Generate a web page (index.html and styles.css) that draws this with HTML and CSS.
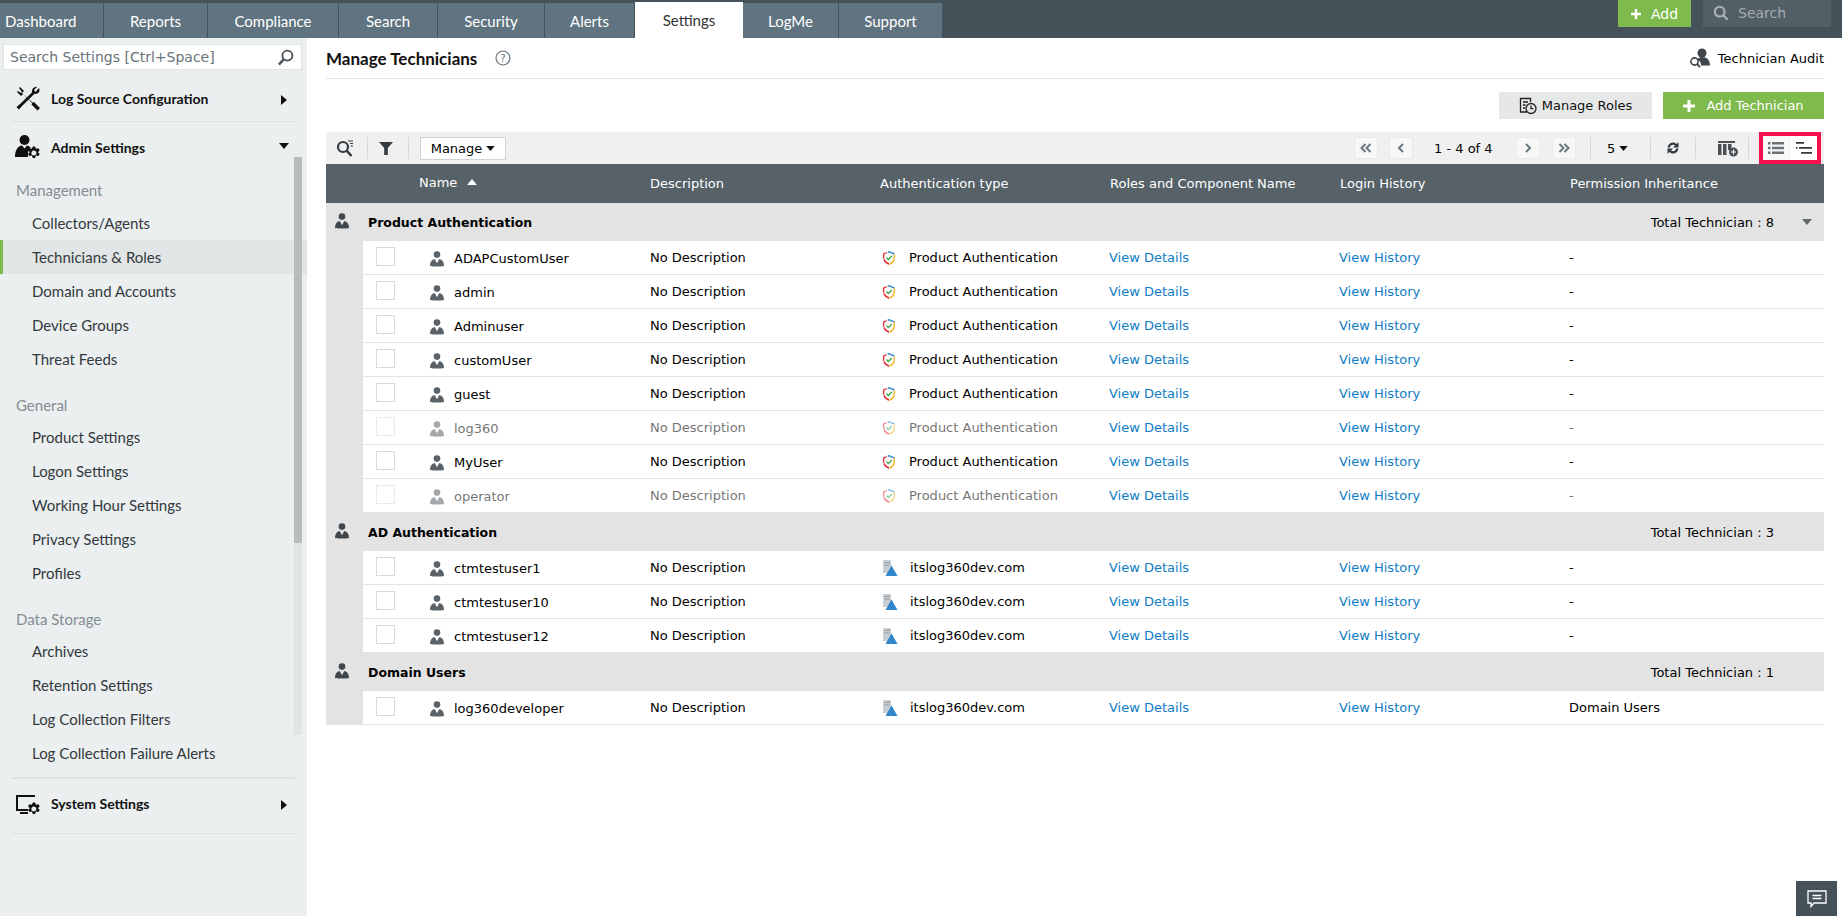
FILE: index.html
```html
<!DOCTYPE html>
<html lang="en">
<head>
<meta charset="utf-8">
<title>Manage Technicians</title>
<link rel="stylesheet" href="styles.css">
</head>
<body>
<svg class="defs" width="0" height="0" aria-hidden="true">
  <symbol id="person" viewBox="0 0 16 16"><circle cx="8" cy="3.6" r="3.3"/><path d="M1 15c0-4 1.600-6.500 4.700-7l2.300 4.200L10.300 8c3.100.5 4.700 3 4.700 7 0 .6-14 .6-14 0z"/></symbol>
  <symbol id="shield" viewBox="0 0 16 16"><path d="M2 3.500 6 2 5.500 3.600 3.300 4.400v3.800L2.200 9.500C1.700 8 2 5 2 3.500z" fill="#e8343c"/><path d="M2.500 10.200 3.700 8.700c.5 1.800 2 3.300 4.300 4.200v2C5 13.800 3.400 12.200 2.500 10.200z" fill="#e8343c"/><path d="M6.500 1.500 8 1l6 2.400-1.300 1.100L8 2.600 7 3z" fill="#2f86cc"/><path d="M14 4v4c0 3.200-2.300 5.700-5.400 7V13c2.400-1 4-2.800 4-5V5z" fill="#f3b52c"/><path d="m5 8 .9-1 1.500 1.500 3-3 .9 1-3.900 3.900z" fill="#3aa64a"/></symbol>
  <symbol id="domain" viewBox="0 0 16 18"><path d="M1 1h8v13H1z" fill="#c9ced2"/><path d="M2.500 3h5v1h-5zM2.500 5.500h5v1h-5z" fill="#8e979d"/><path d="M9.500 6.500 15.500 17h-12z" fill="#2f86cc"/></symbol>
  <symbol id="caret-right" viewBox="0 0 6 10"><path d="M0 0l6 5-6 5z"/></symbol>
  <symbol id="caret-down" viewBox="0 0 10 6"><path d="M0 0h10L5 6z"/></symbol>
</svg>

<header class="topbar">
  <nav class="tabs">
    <a class="tab tab-first">Dashboard</a>
    <a class="tab tab-reports">Reports</a>
    <a class="tab tab-compliance">Compliance</a>
    <a class="tab tab-search">Search</a>
    <a class="tab tab-security">Security</a>
    <a class="tab tab-alerts">Alerts</a>
    <a class="tab tab-settings active">Settings</a>
    <a class="tab tab-logme">LogMe</a>
    <a class="tab tab-support">Support</a>
  </nav>
  <div class="top-actions">
    <a class="top-add"><svg class="ic-plus-sm" viewBox="0 0 12 12"><path d="M4.500 0h3v4.500H12v3H7.500V12h-3V7.500H0v-3h4.500z" fill="#fff"/></svg>Add</a>
    <div class="top-search"><svg class="ic-top-search" viewBox="0 0 18 18" fill="none" stroke="#aab2b7" stroke-width="2.400"><circle cx="7.500" cy="7.500" r="5.500"/><path d="m11.500 11.500 5 5"/></svg>Search</div>
  </div>
</header>

<div class="layout">
  <aside class="sidebar">
    <div class="side-search"><span>Search Settings [Ctrl+Space]</span><svg class="ic-side-search" viewBox="0 0 18 18" fill="none" stroke="#4b555b" stroke-width="2"><circle cx="11" cy="7" r="5.300"/><path d="M7 11 2 16.500" stroke-width="2.600"/></svg></div>

    <div class="side-head side-head-first">
      <svg class="side-ic" viewBox="0 0 26 26"><path d="M5 2 9 6 7 8 17 18l2-1 6 6-2.500 2.500-6-6 1-2L8 9l-2 2-4-4 1-1 3 2 1-1-3-4z"/><path d="M24 3c1 2 .5 4.500-1.500 5.500-1 .5-2 .5-3 .3L7 21l-3 3.500L1.500 22 5 19 17 7.500c-.3-1 -.2-2 .3-3C18.300 2.500 20.500 1.500 22 2l-3 3 1.500 2z"/></svg>
      <span class="side-title">Log Source Configuration</span>
      <svg class="side-caret-r"><use href="#caret-right"/></svg>
    </div>
    <div class="side-rule"></div>
    <div class="side-head side-head-admin">
      <svg class="side-ic" viewBox="0 0 26 26"><circle cx="9.500" cy="6" r="5"/><path d="M0 23c0-7 3-11 7-11.500l2.500 3 2.500-3c1.500.2 2.800 1 3.700 2.200-2 1.600-3 4-2.700 9.300z"/><path d="M20 12.500l1 2.300 2.500-.5 1.200 2-1.700 1.900 1.700 1.900-1.200 2-2.500-.5-1 2.300h-2.200l-1-2.300-2.500.5-1.200-2 1.700-1.900-1.700-1.900 1.200-2 2.500.5 1-2.300zm-1.100 4a2.500 2.500 0 1 0 0 5 2.500 2.500 0 0 0 0-5z" fill-rule="evenodd"/></svg>
      <span class="side-title">Admin Settings</span>
      <svg class="side-caret-d"><use href="#caret-down"/></svg>
    </div>

    <div class="side-scroll">
      <div class="side-group side-group-first">Management</div>
      <a class="side-item">Collectors/Agents</a>
      <a class="side-item selected">Technicians &amp; Roles</a>
      <a class="side-item">Domain and Accounts</a>
      <a class="side-item">Device Groups</a>
      <a class="side-item">Threat Feeds</a>
      <div class="side-group">General</div>
      <a class="side-item">Product Settings</a>
      <a class="side-item">Logon Settings</a>
      <a class="side-item">Working Hour Settings</a>
      <a class="side-item">Privacy Settings</a>
      <a class="side-item">Profiles</a>
      <div class="side-group">Data Storage</div>
      <a class="side-item">Archives</a>
      <a class="side-item">Retention Settings</a>
      <a class="side-item">Log Collection Filters</a>
      <a class="side-item">Log Collection Failure Alerts</a>
      <div class="scroll-track"><div class="scroll-thumb"></div></div>
    </div>

    <div class="side-rule side-rule-sys"></div>
    <div class="side-head side-head-sys">
      <svg class="side-ic" viewBox="0 0 26 26"><path d="M1 4h19v2H3v12h10v2H1z"/><path d="M5 21h8v2H5z"/><path d="M20 11.500l1 2.300 2.500-.5 1.200 2-1.700 1.900 1.700 1.900-1.200 2-2.500-.5-1 2.300h-2.200l-1-2.300-2.500.5-1.200-2 1.700-1.900-1.700-1.900 1.200-2 2.500.5 1-2.300zm-1.100 4a2.500 2.500 0 1 0 0 5 2.500 2.500 0 0 0 0-5z" fill-rule="evenodd"/></svg>
      <span class="side-title">System Settings</span>
      <svg class="side-caret-r"><use href="#caret-right"/></svg>
    </div>
    <div class="side-rule"></div>
  </aside>

  <main class="content">
    <div class="title-row">
      <h1>Manage Technicians</h1>
      <svg class="ic-help" viewBox="0 0 16 16"><circle cx="8" cy="8" r="7" fill="none" stroke="#6a7277" stroke-width="1.200"/><text x="8" y="11.700" text-anchor="middle" class="help-q">?</text></svg>
      <div class="audit">
        <svg class="ic-audit" viewBox="0 0 22 20"><circle cx="13" cy="5" r="4.500" fill="#3f474c"/><path d="M8 11.500c1-1.500 3-2.500 5-2.500 5 0 8 3 8 8.500h-9c.5-2.500-1-5-4-6z" fill="#3f474c"/><circle cx="5.500" cy="13.500" r="3.600" fill="none" stroke="#3f474c" stroke-width="1.600"/><path d="m8 16 3 3" stroke="#3f474c" stroke-width="1.800"/></svg>
        <span>Technician Audit</span>
      </div>
    </div>

    <div class="action-row">
      <a class="btn btn-grey"><svg class="ic-roles" viewBox="0 0 18 18" fill="none" stroke="#222" stroke-width="1.300"><path d="M8 15H1.500V1.500h10V5"/><path d="M4 5h5M4 8h2.500M4 11h2"/><circle cx="12" cy="11.500" r="5"/><path d="M12 8.500v3.200h2.500"/></svg>Manage Roles</a>
      <a class="btn btn-green"><svg class="ic-plus" viewBox="0 0 12 12"><path d="M4.500 0h3v4.500H12v3H7.500V12h-3V7.500H0v-3h4.500z" fill="#fff"/></svg>Add Technician</a>
    </div>

    <div class="toolbar">
      <div class="tool-left">
        <svg class="ic-tsearch" viewBox="0 0 18 18" fill="none" stroke="#333b40" stroke-width="2.200"><circle cx="7" cy="8" r="5"/><path d="m10.500 11.500 5 5.500" stroke-width="2.600"/><path d="M12 2h5M14 4.500h3M14.500 7H17" stroke-width="1.100"/></svg>
        <i class="tsep"></i>
        <svg class="ic-filter" viewBox="0 0 14 14"><path d="M0 1h14L8.800 7v7H5.200V7z" fill="#333b40"/></svg>
        <i class="tsep"></i>
        <a class="manage-btn">Manage<svg class="mini-caret"><use href="#caret-down"/></svg></a>
      </div>
      <div class="tool-right">
        <a class="pg"><svg viewBox="0 0 12 10" fill="none" stroke="#6c7880" stroke-width="2"><path d="M5.500 1 1.500 5l4 4M10.500 1l-4 4 4 4"/></svg></a>
        <a class="pg pg-prev"><svg viewBox="0 0 12 10" fill="none" stroke="#6c7880" stroke-width="2"><path d="M8 1 4 5l4 4"/></svg></a>
        <span class="pg-text">1 - 4 of 4</span>
        <a class="pg pg-next"><svg viewBox="0 0 12 10" fill="none" stroke="#6c7880" stroke-width="2"><path d="m4 1 4 4-4 4"/></svg></a>
        <a class="pg"><svg viewBox="0 0 12 10" fill="none" stroke="#6c7880" stroke-width="2"><path d="m1.500 1 4 4-4 4M6.500 1l4 4-4 4"/></svg></a>
        <i class="tsep tsep-a"></i>
        <span class="per-page">5<svg class="mini-caret"><use href="#caret-down"/></svg></span>
        <i class="tsep tsep-b"></i>
        <svg class="ic-refresh" viewBox="0 0 16 16"><path d="M2.500 7.500C3 4.500 5.300 2.500 8 2.500c1.500 0 2.800.6 3.700 1.500L13.500 2v5.500H8l2-2c-.5-.5-1.200-.8-2-.8-1.500 0-2.800 1-3.100 2.800z" fill="#333b40"/><path d="M13.500 8.500C13 11.500 10.700 13.500 8 13.500c-1.500 0-2.800-.6-3.700-1.500L2.500 14V8.500H8l-2 2c.5.5 1.200.8 2 .8 1.500 0 2.800-1 3.100-2.800z" fill="#333b40"/></svg>
        <i class="tsep tsep-c"></i>
        <svg class="ic-cols" viewBox="0 0 22 18"><path d="M1 2h17v2H1zM1 5h3.500v11H1zM6 5h3.500v11H6zM11 5h3.500v6H11z" fill="#4a5257"/><circle cx="16.500" cy="13" r="4.500" fill="#4a5257"/><path d="M16 10.500h1v2h2v1h-2v2h-1v-2h-2v-1h2z" fill="#fff"/></svg>
        <i class="tsep tsep-d"></i>
        <div class="view-switch">
          <a class="view-btn"><svg viewBox="0 0 16 12" fill="#6a7277"><path d="M0 0h2.500v2.500H0zM4 0h12v2.500H4zM0 4.700h2.500v2.500H0zM4 4.700h12v2.500H4zM0 9.400h2.500v2.500H0zM4 9.400h12v2.500H4z"/></svg></a>
          <a class="view-btn"><svg viewBox="0 0 16 12" fill="#333b40"><path d="M0 0h8v1.800H0zM3 5h13v1.800H3zM5 10h11v1.800H5zM0 5h1.500v1.800H0z"/></svg></a>
        </div>
      </div>
    </div>

    <div class="thead">
      <span class="th th-name">Name<svg class="sort-up" viewBox="0 0 10 6"><path d="M0 6h10L5 0z" fill="#fff"/></svg></span>
      <span class="th">Description</span>
      <span class="th">Authentication type</span>
      <span class="th">Roles and Component Name</span>
      <span class="th">Login History</span>
      <span class="th">Permission Inheritance</span>
    </div>

    <div class="group">
      <svg class="person gicon"><use href="#person"/></svg>
      <b>Product Authentication</b>
      <span class="total">Total Technician : 8</span>
      <svg class="group-caret"><use href="#caret-down"/></svg>
    </div>
    <div class="rows">
      <div class="row"><i class="cb"></i><svg class="person"><use href="#person"/></svg><span class="uname">ADAPCustomUser</span><span>No Description</span><span class="auth"><svg class="ic-shield"><use href="#shield"/></svg>Product Authentication</span><a class="lnk">View Details</a><a class="lnk">View History</a><span>-</span></div>
      <div class="row"><i class="cb"></i><svg class="person"><use href="#person"/></svg><span class="uname">admin</span><span>No Description</span><span class="auth"><svg class="ic-shield"><use href="#shield"/></svg>Product Authentication</span><a class="lnk">View Details</a><a class="lnk">View History</a><span>-</span></div>
      <div class="row"><i class="cb"></i><svg class="person"><use href="#person"/></svg><span class="uname">Adminuser</span><span>No Description</span><span class="auth"><svg class="ic-shield"><use href="#shield"/></svg>Product Authentication</span><a class="lnk">View Details</a><a class="lnk">View History</a><span>-</span></div>
      <div class="row"><i class="cb"></i><svg class="person"><use href="#person"/></svg><span class="uname">customUser</span><span>No Description</span><span class="auth"><svg class="ic-shield"><use href="#shield"/></svg>Product Authentication</span><a class="lnk">View Details</a><a class="lnk">View History</a><span>-</span></div>
      <div class="row"><i class="cb"></i><svg class="person"><use href="#person"/></svg><span class="uname">guest</span><span>No Description</span><span class="auth"><svg class="ic-shield"><use href="#shield"/></svg>Product Authentication</span><a class="lnk">View Details</a><a class="lnk">View History</a><span>-</span></div>
      <div class="row dim"><i class="cb"></i><svg class="person"><use href="#person"/></svg><span class="uname">log360</span><span>No Description</span><span class="auth"><svg class="ic-shield"><use href="#shield"/></svg>Product Authentication</span><a class="lnk">View Details</a><a class="lnk">View History</a><span>-</span></div>
      <div class="row"><i class="cb"></i><svg class="person"><use href="#person"/></svg><span class="uname">MyUser</span><span>No Description</span><span class="auth"><svg class="ic-shield"><use href="#shield"/></svg>Product Authentication</span><a class="lnk">View Details</a><a class="lnk">View History</a><span>-</span></div>
      <div class="row dim"><i class="cb"></i><svg class="person"><use href="#person"/></svg><span class="uname">operator</span><span>No Description</span><span class="auth"><svg class="ic-shield"><use href="#shield"/></svg>Product Authentication</span><a class="lnk">View Details</a><a class="lnk">View History</a><span>-</span></div>
    </div>

    <div class="group">
      <svg class="person gicon"><use href="#person"/></svg>
      <b>AD Authentication</b>
      <span class="total">Total Technician : 3</span>
    </div>
    <div class="rows">
      <div class="row"><i class="cb"></i><svg class="person"><use href="#person"/></svg><span class="uname">ctmtestuser1</span><span>No Description</span><span class="auth"><svg class="ic-domain"><use href="#domain"/></svg>itslog360dev.com</span><a class="lnk">View Details</a><a class="lnk">View History</a><span>-</span></div>
      <div class="row"><i class="cb"></i><svg class="person"><use href="#person"/></svg><span class="uname">ctmtestuser10</span><span>No Description</span><span class="auth"><svg class="ic-domain"><use href="#domain"/></svg>itslog360dev.com</span><a class="lnk">View Details</a><a class="lnk">View History</a><span>-</span></div>
      <div class="row"><i class="cb"></i><svg class="person"><use href="#person"/></svg><span class="uname">ctmtestuser12</span><span>No Description</span><span class="auth"><svg class="ic-domain"><use href="#domain"/></svg>itslog360dev.com</span><a class="lnk">View Details</a><a class="lnk">View History</a><span>-</span></div>
    </div>

    <div class="group">
      <svg class="person gicon"><use href="#person"/></svg>
      <b>Domain Users</b>
      <span class="total">Total Technician : 1</span>
    </div>
    <div class="rows">
      <div class="row"><i class="cb"></i><svg class="person"><use href="#person"/></svg><span class="uname">log360developer</span><span>No Description</span><span class="auth"><svg class="ic-domain"><use href="#domain"/></svg>itslog360dev.com</span><a class="lnk">View Details</a><a class="lnk">View History</a><span>Domain Users</span></div>
    </div>
  </main>
</div>

<a class="chat"><svg viewBox="0 0 20 18" fill="none" stroke="#fff" stroke-width="1.300"><path d="M1 1h18v12H7l-3 3.500V13H1z"/><path d="M5.500 5.500h9M5.500 8.500h9"/></svg></a>
</body>
</html>
```

FILE: styles.css
```css
* { box-sizing: border-box; }
html, body { margin: 0; padding: 0; height: 100%; }
body {
  width: 1842px;
  height: 916px;
  overflow: hidden;
  position: relative;
  background: #fff;
  color: #000;
  font-family: "DejaVu Sans", sans-serif;
  font-size: 13px;
  display: flex;
  flex-direction: column;
}
a { color: inherit; text-decoration: none; }
.defs { position: absolute; }

/* top bar */
.topbar {
  height: 38px;
  flex: none;
  background: #45525a;
  display: flex;
  justify-content: space-between;
  padding-top: 3px;
}
.tabs { display: flex; height: 35px; }
.tab {
  background: #5f7480;
  color: #fff;
  font-family: Lato, sans-serif;
  font-size: 15px;
  display: flex;
  align-items: center;
  justify-content: center;
  border-right: 1px solid #45525a;
}
.tab-first { width: 104px; justify-content: flex-start; padding-left: 5px; }
.tab-reports { width: 104px; }
.tab-compliance { width: 131px; }
.tab-search { width: 99px; }
.tab-security { width: 107px; }
.tab-alerts { width: 90px; }
.tab-settings { width: 108px; }
.tab-logme { width: 96px; }
.tab-support { width: 104px; }
.tab.active { background: #fff; color: #333; border-right: 0; margin-top: -1px; height: 36px; }
.top-actions { display: flex; align-items: flex-start; margin-top: -3px; padding-right: 11px; }
.top-add {
  width: 73px;
  height: 27px;
  background: #7fba4c;
  color: #fff;
  display: flex;
  align-items: center;
  justify-content: center;
  font-size: 14px;
  margin-right: 12px;
}
.ic-plus-sm { width: 10px; height: 10px; margin-right: 10px; }
.top-search {
  width: 128px;
  height: 27px;
  background: #535f67;
  color: #a4acb1;
  display: flex;
  align-items: center;
  font-size: 14px;
  padding: 0 0 2px 10px;
}
.ic-top-search { width: 16px; height: 16px; margin-right: 9px; }

.layout { flex: 1; display: flex; min-height: 0; }

/* sidebar */
.sidebar {
  width: 307px;
  flex: none;
  background: #ebeff0;
  padding-top: 6px;
}
.side-search {
  margin-left: 3px;
  width: 299px;
  height: 26px;
  background: #fff;
  border: 1px solid #e1e4e5;
  color: #69747a;
  font-size: 14px;
  display: flex;
  align-items: center;
  justify-content: space-between;
  padding: 0 7px 0 6px;
}
.ic-side-search { width: 17px; height: 17px; }
.side-head {
  display: flex;
  align-items: center;
  padding-left: 15px;
  font-family: Lato, sans-serif;
  font-weight: 700;
  font-size: 14px;
  color: #111;
}
.side-head-first { height: 36px; margin-top: 10px; }
.side-head-admin { height: 34px; margin-top: 8px; }
.side-head-sys { height: 49px; }
.side-ic { width: 26px; height: 26px; fill: #111; flex: none; }
.side-title { margin-left: 10px; flex: 1; }
.side-caret-r { width: 6px; height: 10px; fill: #111; margin-right: 20px; margin-top: 3px; }
.side-caret-d { width: 10px; height: 6px; fill: #111; margin-right: 18px; margin-top: -2px; }
.side-rule { height: 1px; background: #dde1e2; margin: 5px 12px 0; }
.side-rule-sys { margin-top: 7px; height: 2px; }
.side-scroll { position: relative; }
.side-group {
  height: 30px;
  margin-top: 14px;
  padding-left: 16px;
  display: flex;
  align-items: center;
  color: #838d92;
  font-family: Lato, sans-serif;
  font-size: 15px;
}
.side-group-first { margin-top: 10px; height: 32px; }
.side-item {
  display: flex;
  align-items: center;
  height: 34px;
  padding-left: 32px;
  font-family: Lato, sans-serif;
  font-size: 15px;
  color: #33393d;
}
.side-item.selected { background: #e1e5e5; border-left: 3px solid #7fba4c; padding-left: 29px; }
.scroll-track {
  position: absolute;
  left: 294px;
  top: -17px;
  width: 8px;
  height: 578px;
  background: #e2e5e5;
}
.scroll-thumb { height: 386px; background: #b5bdbd; }

/* main */
.content { width: 1498px; margin-left: 19px; }
.title-row {
  height: 41px;
  display: flex;
  align-items: center;
  border-bottom: 1px solid #e1e3e4;
}
h1 {
  margin: 0;
  font-family: Lato, sans-serif;
  font-size: 17px;
  font-weight: 700;
  color: #111;
}
.ic-help { width: 16px; height: 16px; margin-left: 18px; }
.help-q { font-family: "DejaVu Sans", sans-serif; font-size: 10px; fill: #6a7277; }
.audit { margin-left: auto; display: flex; align-items: center; }
.ic-audit { width: 22px; height: 20px; margin-right: 7px; }
.action-row { display: flex; justify-content: flex-end; gap: 11px; margin-top: 13px; }
.btn {
  height: 27px;
  display: flex;
  align-items: center;
  justify-content: center;
  font-size: 13px;
}
.btn-grey { width: 153px; background: #e6e8e8; color: #111; }
.btn-green { width: 161px; background: #7fba4c; color: #fff; }
.ic-roles { width: 18px; height: 18px; margin-right: 5px; }
.ic-plus { width: 12px; height: 12px; margin-right: 11px; }

.toolbar {
  margin-top: 13px;
  height: 32px;
  background: #f0f0f0;
  display: flex;
  justify-content: space-between;
  align-items: center;
  padding-right: 7px;
}
.tool-left, .tool-right { display: flex; align-items: center; }
.ic-tsearch { width: 18px; height: 18px; margin-left: 10px; }
.tsep { width: 1px; height: 22px; background: #d4d6d7; display: block; margin: 0 12px 0 13px; }
.ic-filter { width: 14px; height: 14px; margin: 0 1px 0 -1px; }
.tool-left .tsep + .ic-filter + .tsep { margin: 0 11px 0 14px; }
.manage-btn {
  width: 86px;
  height: 23px;
  background: #fff;
  border: 1px solid #d1d4d5;
  display: flex;
  align-items: center;
  justify-content: center;
  font-size: 13px;
}
.mini-caret { width: 9px; height: 5px; margin-left: 4px; fill: #111; }
.pg {
  width: 24px;
  height: 22px;
  background: #f7f7f7;
  border: 1px solid #eaeaea;
  display: flex;
  align-items: center;
  justify-content: center;
}
.pg svg { width: 12px; height: 10px; }
.pg-prev { margin-left: 11px; }
.pg-next { margin-right: 12px; }
.pg-text { width: 103px; padding-left: 21px; font-size: 13px; white-space: nowrap; }
.tsep-a { margin: 0 16px 0 14px; }
.per-page { display: flex; align-items: center; font-size: 13px; width: 31px; }
.tsep-b { margin: 0 14px 0 12px; }
.ic-refresh { width: 16px; height: 16px; }
.tsep-c { margin: 0 21px 0 14px; }
.ic-cols { width: 22px; height: 18px; }
.tsep-d { margin: 0 14px 0 9px; }
.view-switch {
  display: flex;
  width: 54px;
  height: 24px;
  background: #f7f7f7;
  gap: 1px;
  outline: 4px solid #f8114f;
}
.view-btn {
  flex: 1;
  background: #fff;
  display: flex;
  align-items: center;
  justify-content: center;
}
.view-btn:first-child { background: #f7f7f7; }
.view-btn svg { width: 16px; height: 12px; }

.thead {
  height: 39px;
  background: #566168;
  display: grid;
  grid-template-columns: 324px 230px 229px 230px 230px 1fr;
  align-items: center;
  padding-left: 93px;
  color: #fff;
}
.thead .th-name { margin-left: 0; display: flex; align-items: center; padding-bottom: 3px; }
.thead { grid-template-columns: 231px 230px 230px 230px 230px 1fr; }
.th { font-size: 13px; }
.sort-up { width: 10px; height: 6px; margin-left: 10px; }

.group {
  height: 38px;
  background: #e3e3e3;
  display: flex;
  align-items: center;
  padding-left: 8px;
}
.person { width: 16px; height: 16px; fill: #5a6267; flex: none; }
.gicon { fill: #3f474c; margin-top: -2px; }
.group b { margin-left: 18px; font-size: 12.500px; }
.total { margin-left: auto; margin-right: 50px; font-size: 13px; }
.group-caret { width: 10px; height: 6px; fill: #5f686d; position: absolute; left: 1802px; }
.group:first-of-type { position: relative; }
.rows { background: #e3e3e3; }
.rows { padding-left: 37px; }
.row {
  height: 34px;
  background: #fff;
  border-bottom: 1px solid #e3e3e3;
  display: grid;
  grid-template-columns: 67px 24px 196px 230px 229px 230px 230px 1fr;
  align-items: center;
  font-size: 13px;
}
.row > .person { margin: 2px 0 0 -1px; }
.cb {
  display: block;
  width: 19px;
  height: 19px;
  margin: -3px 0 0 13px;
  background: #fff;
  border: 1px solid #d8dadb;
}
.uname { padding-top: 2px; }
.auth { display: flex; align-items: center; }
.ic-shield { width: 16px; height: 16px; margin: 0 12px 0 1px; }
.ic-domain { width: 16px; height: 18px; margin: 0 12px 0 2px; }
.lnk { color: #0f7cc4; }
.dim > .cb, .dim > .person, .dim > .uname, .dim > span:not(.uname) { opacity: .55; }

.chat {
  position: absolute;
  right: 5px;
  bottom: 0;
  width: 41px;
  height: 35px;
  background: #45525a;
  display: flex;
  align-items: center;
  justify-content: center;
}
.chat svg { width: 20px; height: 18px; }
```
